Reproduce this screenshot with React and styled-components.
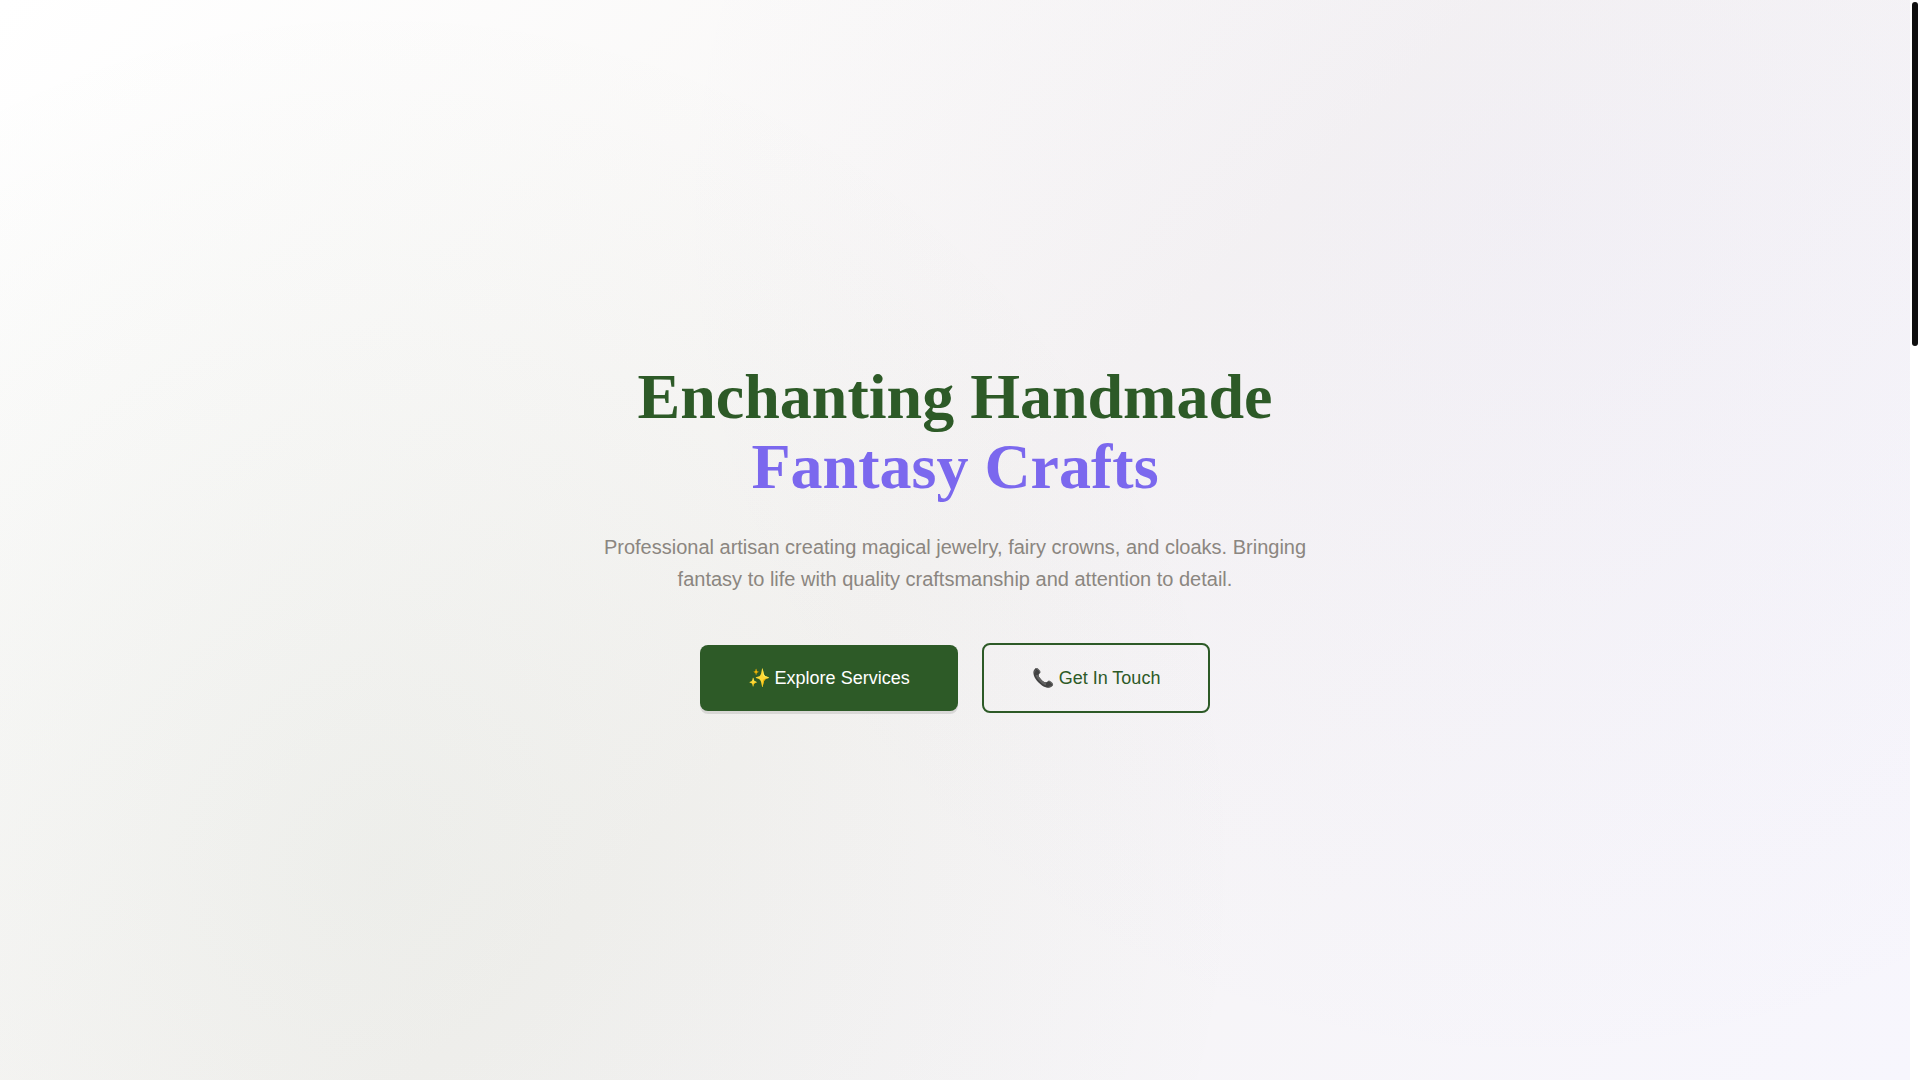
import React from "react";
import styled, { createGlobalStyle } from "styled-components";

const GlobalStyle = createGlobalStyle`
  * {
    box-sizing: border-box;
  }

  body {
    margin: 0;
    background: #ffffff;
    font-family: "Liberation Sans", Arial, sans-serif;
  }
`;

const StyledPage = styled.div`
  display: flex;
  min-height: 100vh;
`;

const StyledHero = styled.main`
  display: flex;
  flex: 1;
  flex-direction: column;
  align-items: center;
  justify-content: center;
  padding: 0 24px 5px;
  text-align: center;
  background:
    radial-gradient(circle at 20% 80%, rgba(45, 90, 39, 0.05) 0%, transparent 50%),
    radial-gradient(circle at 80% 20%, rgba(123, 104, 238, 0.04) 0%, transparent 50%),
    linear-gradient(135deg, #ffffff 0%, #f6f4f3 50%, #f7f6fd 100%);
`;

const StyledTitle = styled.h1`
  margin: 0 0 29px;
  color: #2d5a27;
  font-family: "Liberation Serif", "Times New Roman", serif;
  font-size: 64px;
  font-weight: 700;
  line-height: 70px;
`;

const StyledAccent = styled.span`
  display: block;
  color: #7b68ee;
`;

const StyledText = styled.p`
  max-width: 720px;
  margin: 0 0 48px;
  color: #8b8680;
  font-size: 20px;
  line-height: 32px;
`;

const StyledActions = styled.div`
  display: flex;
  flex-wrap: wrap;
  align-items: center;
  justify-content: center;
  gap: 24px;
`;

const StyledButton = styled.button`
  padding: 18px 48px;
  border: ${(props) => (props.$outlined ? "2px solid #2d5a27" : "none")};
  border-radius: 8px;
  color: ${(props) => (props.$outlined ? "#2d5a27" : "#ffffff")};
  background: ${(props) => (props.$outlined ? "transparent" : "#2d5a27")};
  box-shadow: ${(props) => (props.$outlined ? "none" : "0 3px 0 rgba(0, 0, 0, 0.1)")};
  font-family: inherit;
  font-size: 18px;
  line-height: 30px;
  cursor: pointer;
`;

const StyledTrack = styled.div`
  width: 10px;
  padding: 2px;
  background: #ffffff;
`;

const StyledThumb = styled.div`
  position: sticky;
  top: 2px;
  height: calc(32vh - 2px);
  border-radius: 3px;
  background: #0f0f0f;
`;

const App = () => {
  return (
    <StyledPage>
      <GlobalStyle />
      <StyledHero>
        <StyledTitle>
          Enchanting Handmade
          <StyledAccent>Fantasy Crafts</StyledAccent>
        </StyledTitle>
        <StyledText>
          Professional artisan creating magical jewelry, fairy crowns, and
          cloaks. Bringing fantasy to life with quality craftsmanship and
          attention to detail.
        </StyledText>
        <StyledActions>
          <StyledButton type="button">✨ Explore Services</StyledButton>
          <StyledButton type="button" $outlined>
            📞 Get In Touch
          </StyledButton>
        </StyledActions>
      </StyledHero>
      <StyledTrack aria-hidden="true">
        <StyledThumb />
      </StyledTrack>
    </StyledPage>
  );
};

export default App;
